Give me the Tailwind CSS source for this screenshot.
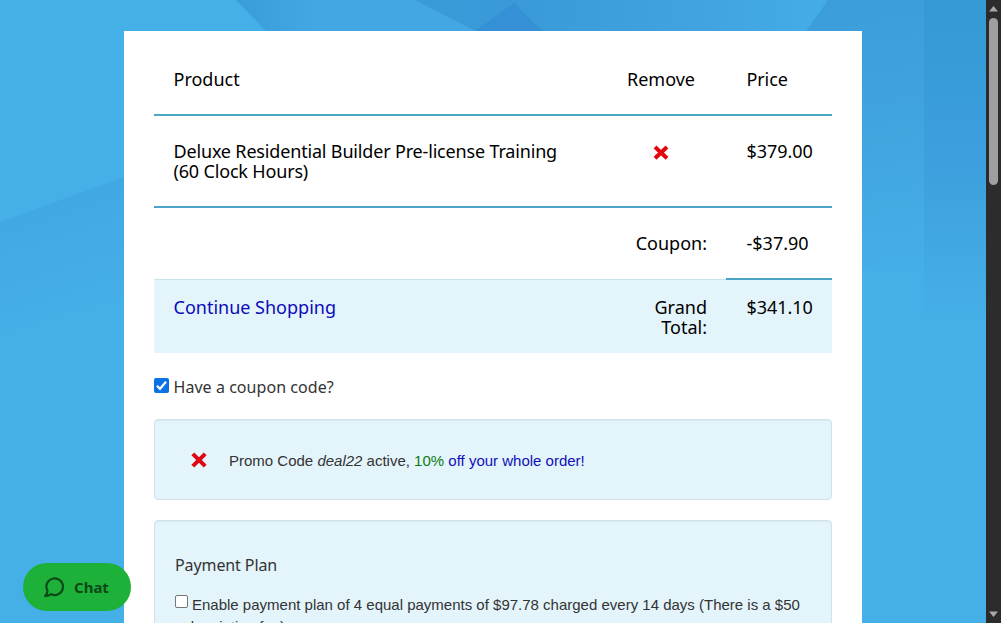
<!DOCTYPE html>
<html lang="en">
<head>
<meta charset="utf-8">
<title>Shopping Cart</title>
<script src="https://cdn.jsdelivr.net/npm/@tailwindcss/browser@4"></script>
</head>
<body class="h-[623px] w-[1001px] overflow-hidden font-['Noto_Sans',sans-serif] text-black">
<div class="relative flex h-[623px] overflow-hidden">
  <div class="relative w-[986px] overflow-hidden bg-[#45afe8]">
    <svg class="absolute inset-0" width="986" height="623" viewBox="0 0 986 623">
      <defs>
        <linearGradient id="top" x1="0" x2="1" y1="0" y2="0"><stop offset="0" stop-color="#389dd9"/><stop offset=".3" stop-color="#43a7e3"/><stop offset="1" stop-color="#43a7e3"/></linearGradient>
        <linearGradient id="mid" gradientUnits="userSpaceOnUse" x1="415" x2="815" y1="0" y2="0"><stop offset="0" stop-color="#3b9bd9"/><stop offset=".25" stop-color="#3a9ad9"/><stop offset=".7" stop-color="#41a3e0"/><stop offset="1" stop-color="#43ace6"/></linearGradient>
        <linearGradient id="right" gradientUnits="userSpaceOnUse" x1="880" x2="930" y1="0" y2="270"><stop offset="0" stop-color="#3c9ddb"/><stop offset=".5" stop-color="#41a5e0"/><stop offset="1" stop-color="#45afe8"/></linearGradient>
        <linearGradient id="edge" gradientUnits="userSpaceOnUse" x1="0" x2="0" y1="0" y2="320"><stop offset="0" stop-color="#3599d6"/><stop offset=".5" stop-color="#3d9fdd"/><stop offset="1" stop-color="#45afe8"/></linearGradient>
        <linearGradient id="left" gradientUnits="userSpaceOnUse" x1="90" x2="125" y1="190" y2="300"><stop offset="0" stop-color="#41a8e3"/><stop offset="1" stop-color="#45afe8"/></linearGradient>
      </defs>
      <path fill="url(#top)" d="M236 0H500V31H266Z"/>
      <path fill="url(#mid)" d="M415 0H828L806 31H475Z"/>
      <path fill="#348cd3" fill-opacity=".75" d="M475 31 514 3 542 31Z"/>
      <path fill="url(#right)" d="M828 0H926V270H862V31H806Z"/>
      <path fill="url(#edge)" d="M924 0H986V320H924Z"/>
      <path fill="url(#left)" d="M0 222L124 177V350H0Z"/>
    </svg>
    <main class="relative ml-[124px] mt-[31px] h-[640px] w-[738px] bg-white px-[30px]">
      <section class="text-[18px] leading-5">
        <div class="flex h-[85px] border-b-2 border-[#4ba9c4] pt-[38px]">
          <div class="w-[442px] pl-[19.5px]">Product</div>
          <div class="w-[130px] text-center">Remove</div>
          <div class="w-[106px] pl-[20.5px] tracking-[-0.1px]">Price</div>
        </div>
        <div class="flex h-[92px] border-b-2 border-[#4ba3cb] pt-[25px]">
          <div class="w-[442px] whitespace-nowrap pl-[19.5px] tracking-[-0.17px]">Deluxe Residential Builder Pre-license Training<br>(60 Clock Hours)</div>
          <div class="flex w-[130px] justify-center pt-[3px]"><svg width="18" height="17" viewBox="0 0 18 17"><path d="M3 3 15 14.3M15 3 3 14.3" stroke="#e3060c" stroke-width="4"/></svg></div>
          <div class="w-[106px] pl-[20.5px] tracking-[-0.05px]">$379.00</div>
        </div>
        <div class="flex h-[72px]">
          <div class="w-[572px] border-b border-[#c9e3ea] pr-[19px] pt-[25px] text-right">Coupon:</div>
          <div class="w-[106px] border-b-2 border-[#4ba3c4] pl-[20.5px] pt-[25px]">-$37.90</div>
        </div>
        <div class="flex h-[73px] bg-[#e4f4fb] pt-[17px]">
          <div class="w-[442px] pl-[19.5px] text-[#0b0bb8]">Continue Shopping</div>
          <div class="w-[130px] pr-[19px] text-right">Grand<br>Total:</div>
          <div class="w-[106px] pl-[20.5px] tracking-[-0.05px]">$341.10</div>
        </div>
      </section>
      <label class="mt-6 flex h-5 items-center text-[16px] leading-5 text-[#333]">
        <svg class="mr-1 -mt-[3px] shrink-0" width="15" height="15" viewBox="0 0 15 15"><rect width="15" height="15" rx="2" fill="#0b72e3"/><path d="M3 7.8 6 10.8 12 3.8" fill="none" stroke="#fff" stroke-width="2.2"/></svg>
        <span class="pl-[0.5px] tracking-[0.05px]">Have a coupon code?</span>
      </label>
      <section class="mt-[22px] flex h-[81px] items-center rounded-[4px] border border-[#d0e3e9] bg-[#e4f4fb] pl-[35px] font-['Liberation_Sans',sans-serif] text-[15px] text-[#333] shadow-[inset_0_1px_1px_rgba(0,0,0,0.05)]">
        <svg width="18" height="18" viewBox="0 0 18 18"><path d="M2.8 2.8 15.2 15.2M15.2 2.8 2.8 15.2" stroke="#df0712" stroke-width="4"/></svg>
        <p class="ml-[21px] mt-[3px] whitespace-nowrap">Promo Code <i>deal22</i> active, <span class="text-[#0a7c12]">10%</span> <span class="text-[#1010b8]">off your whole order!</span></p>
      </section>
      <section class="mt-5 h-[160px] rounded-[4px] border border-[#d0e3e9] bg-[#e4f4fb] px-5 pt-[34px] text-[#333] shadow-[inset_0_1px_1px_rgba(0,0,0,0.05)]">
        <h2 class="text-[16px] leading-5 tracking-[-0.1px]">Payment Plan</h2>
        <p class="mt-[19px] whitespace-nowrap font-['Liberation_Sans',sans-serif] text-[15px] leading-[22px]"><span class="mr-1 inline-block size-[13px] rounded-[2px] border border-[#767676] bg-white align-[2px]"></span>Enable payment plan of 4 equal payments of $97.78 charged every 14 days (There is a $50<br>subscription fee)</p>
      </section>
    </main>
  </div>
  <div class="flex w-[15px] flex-col items-center justify-between bg-[#2c2c2c]">
    <div class="flex flex-col items-center">
      <svg class="mt-1.5" width="9" height="6" viewBox="0 0 9 6"><path d="M0 5.5 4.5 0 9 5.5Z" fill="#a8a8a8"/></svg>
      <div class="mt-1.5 h-[167px] w-[9px] rounded-full bg-[#9f9f9f]"></div>
    </div>
    <svg class="mb-1.5" width="9" height="6" viewBox="0 0 9 6"><path d="M0 .5 4.5 6 9 .5Z" fill="#a8a8a8"/></svg>
  </div>
  <button class="absolute left-[23px] top-[563px] flex h-12 w-[108px] items-center rounded-full bg-[#1eb139] pl-[21px] text-[15px] font-bold text-[#0b4a17]">
    <svg width="20" height="21" viewBox="0 0 20 21" fill="none" stroke="currentColor" stroke-width="2.2" stroke-linejoin="round"><path d="M3.4 13.6A8.3 8.3 0 1 1 7.2 17.2C5.5 18.5 3.6 19.1 1.2 19.1 2.7 17.4 3.5 15.8 3.4 13.6Z"/></svg>
    <span class="ml-[10px]">Chat</span>
  </button>
</div>
</body>
</html>
